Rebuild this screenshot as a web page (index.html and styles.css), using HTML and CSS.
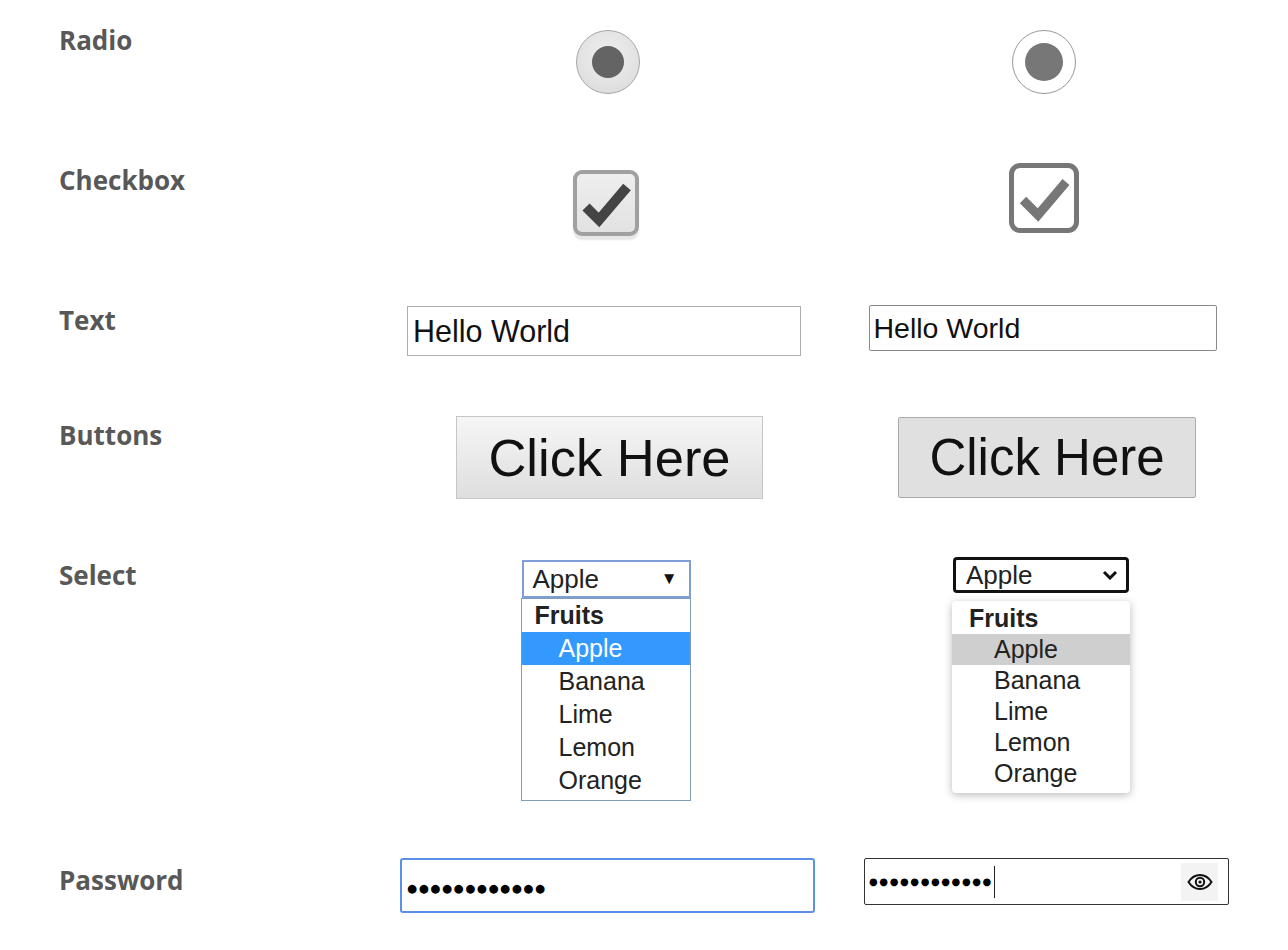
FILE: index.html
```html
<!DOCTYPE html>
<html lang="en">
<head>
<meta charset="utf-8">
<title>Form controls</title>
<link rel="stylesheet" href="styles.css">
</head>
<body>
<div class="grid">
  <div class="label">Radio</div>
  <div class="cell"><span class="radio radio-a"><span class="radio-dot"></span></span></div>
  <div class="cell"><span class="radio radio-b"><span class="radio-dot"></span></span></div>

  <div class="label">Checkbox</div>
  <div class="cell">
    <span class="check check-a">
      <svg width="58" height="58" viewBox="0 0 58 58"><path d="M9 33 L22 46 L50 13" fill="none" stroke="#444" stroke-width="10" stroke-linejoin="miter"/></svg>
    </span>
  </div>
  <div class="cell">
    <span class="check check-b">
      <svg width="60" height="60" viewBox="0 0 60 60"><path d="M9 32 L24 47 L52 14" fill="none" stroke="#777" stroke-width="9" stroke-linejoin="miter"/></svg>
    </span>
  </div>

  <div class="label">Text</div>
  <div class="cell"><input class="text text-a" type="text" value="Hello World"></div>
  <div class="cell"><input class="text text-b" type="text" value="Hello World"></div>

  <div class="label">Buttons</div>
  <div class="cell"><button class="btn btn-a" type="button">Click Here</button></div>
  <div class="cell"><button class="btn btn-b" type="button">Click Here</button></div>

  <div class="label">Select</div>
  <div class="cell">
    <div class="sel sel-a">
      <div class="sel-box"><span>Apple</span><span class="tri">&#9660;</span></div>
      <div class="sel-list">
        <div class="grp">Fruits</div>
        <div class="opt on">Apple</div>
        <div class="opt">Banana</div>
        <div class="opt">Lime</div>
        <div class="opt">Lemon</div>
        <div class="opt">Orange</div>
      </div>
    </div>
  </div>
  <div class="cell">
    <div class="sel sel-b">
      <div class="sel-box"><span>Apple</span>
        <svg class="chev" width="16" height="10" viewBox="0 0 16 10"><path d="M2 2 L8 8 L14 2" fill="none" stroke="#111" stroke-width="3"/></svg>
      </div>
      <div class="sel-list">
        <div class="grp">Fruits</div>
        <div class="opt on">Apple</div>
        <div class="opt">Banana</div>
        <div class="opt">Lime</div>
        <div class="opt">Lemon</div>
        <div class="opt">Orange</div>
      </div>
    </div>
  </div>

  <div class="label">Password</div>
  <div class="cell">
    <div class="pw pw-a"><span class="dots">&#9679;&#9679;&#9679;&#9679;&#9679;&#9679;&#9679;&#9679;&#9679;&#9679;&#9679;&#9679;</span></div>
  </div>
  <div class="cell">
    <div class="pw pw-b">
      <span class="dots">&#9679;&#9679;&#9679;&#9679;&#9679;&#9679;&#9679;&#9679;&#9679;&#9679;&#9679;&#9679;</span><span class="caret"></span>
      <span class="eye">
        <svg width="26" height="16" viewBox="0 0 26 16"><path d="M1.5 8 C5 2.5 9 1 13 1 C17 1 21 2.5 24.5 8 C21 13.5 17 15 13 15 C9 15 5 13.5 1.5 8 Z" fill="none" stroke="#111" stroke-width="2"/><circle cx="13" cy="8" r="4.2" fill="none" stroke="#111" stroke-width="2"/><circle cx="13" cy="8" r="1.6" fill="#111"/></svg>
      </span>
    </div>
  </div>
</div>
</body>
</html>
```
FILE: styles.css
```css
html, body {
  margin: 0;
  padding: 0;
  background: #fff;
}

.grid {
  display: grid;
  grid-template-columns: 330px 435px 437px;
  grid-template-rows: 140px 140px 115px 140px 305px 110px;
  padding-left: 60px;
  font-family: "Liberation Sans", Arial, sans-serif;
}

.label {
  font-family: "Open Sans", sans-serif;
  font-weight: 700;
  font-size: 26px;
  line-height: 32px;
  color: #585858;
  padding-top: 24px;
  margin-left: -1px;
}

.cell {
  display: flex;
  justify-content: center;
  align-items: flex-start;
}

/* radio */
.radio {
  box-sizing: border-box;
  width: 64px;
  height: 64px;
  border-radius: 50%;
  margin-top: 30px;
  display: flex;
  align-items: center;
  justify-content: center;
}
.radio-a {
  border: 1px solid #a8a8a8;
  background: radial-gradient(circle at 50% 40%, #f0f0f0 0%, #e2e2e2 60%, #d6d6d6 100%);
}
.radio-a .radio-dot {
  width: 32px;
  height: 32px;
  border-radius: 50%;
  background: #646464;
}
.radio-b {
  border: 1.5px solid #9a9a9a;
  background: #fff;
}
.radio-b .radio-dot {
  width: 38px;
  height: 38px;
  border-radius: 50%;
  background: #777;
}

/* checkbox */
.check {
  box-sizing: border-box;
  display: flex;
  align-items: center;
  justify-content: center;
}
.check-a {
  width: 66px;
  height: 66px;
  margin-top: 30px;
  margin-left: -3px;
  border: 4px solid #a0a0a0;
  border-radius: 9px;
  background: linear-gradient(#eeeeee, #e2e2e2);
  box-shadow: 0 4px 2px #e6e6e6;
}
.check-b {
  width: 70px;
  height: 70px;
  margin-top: 23px;
  border: 5px solid #777;
  border-radius: 11px;
  background: #fff;
}

/* text inputs */
.text {
  box-sizing: border-box;
  margin: 0;
  font-family: "Liberation Sans", Arial, sans-serif;
  color: #111;
  background: #fff;
  outline: none;
}
.text-a {
  width: 394px;
  height: 50px;
  margin-top: 26px;
  margin-left: -7px;
  border: 1px solid #adadad;
  padding: 0 5px;
  font-size: 30.5px;
}
.text-b {
  width: 348px;
  height: 46px;
  margin-top: 25px;
  margin-left: -2px;
  border: 1px solid #8a8a8a;
  border-radius: 2px;
  padding: 0 4px;
  font-size: 28.5px;
}

/* buttons */
.btn {
  box-sizing: border-box;
  margin: 0;
  padding: 0;
  font-family: "Liberation Sans", Arial, sans-serif;
  color: #111;
  cursor: pointer;
}
.btn-a {
  width: 307px;
  height: 83px;
  margin-top: 21px;
  margin-left: 4px;
  border: 1px solid #c6c6c6;
  background: linear-gradient(#f6f6f6, #dedede);
  font-size: 52.5px;
}
.btn-b {
  width: 298px;
  height: 81px;
  margin-top: 22px;
  margin-left: 7px;
  border: 1px solid #aaa;
  border-radius: 2px;
  background: #e0e0e0;
  font-size: 51px;
}

/* selects */
.sel {
  font-family: "Liberation Sans", Arial, sans-serif;
  font-size: 25px;
  color: #222;
}
.sel-box {
  box-sizing: border-box;
  display: flex;
  align-items: center;
  justify-content: space-between;
  background: #fff;
}
.sel-a {
  width: 170px;
  margin-top: 25px;
  margin-left: -4px;
}
.sel-a .sel-box {
  height: 38px;
  border: 2px solid #7f9ed8;
  padding: 0 11px 0 9px;
  font-size: 26px;
  margin-left: 1px;
}
.tri {
  font-size: 17px;
  color: #111;
}
.sel-a .sel-list {
  box-sizing: border-box;
  border: 1px solid #7f9db9;
  padding-bottom: 3px;
}
.sel-a .grp {
  font-weight: 700;
  padding-left: 13px;
  height: 33px;
  line-height: 33px;
}
.sel-a .opt {
  padding-left: 37px;
  height: 33px;
  line-height: 32px;
}
.sel-a .opt.on {
  background: #3399ff;
  color: #fff;
}

.sel-b {
  width: 178px;
  margin-top: 22px;
  margin-left: -5px;
}
.sel-b .sel-box {
  width: 176px;
  margin-left: 1px;
  height: 36px;
  border: 3px solid #111;
  border-radius: 4px;
  padding: 0 8px 0 10px;
  font-size: 26px;
}
.sel-b .sel-list {
  margin-top: 8px;
  background: #fff;
  border-radius: 4px;
  box-shadow: 0 2px 8px rgba(0, 0, 0, 0.28);
  padding: 2px 0 4px;
}
.sel-b .grp {
  font-weight: 700;
  padding-left: 17px;
  height: 31px;
  line-height: 31px;
}
.sel-b .opt {
  padding-left: 42px;
  height: 31px;
  line-height: 31px;
}
.sel-b .opt.on {
  background: #cfcfcf;
}

/* password */
.pw {
  box-sizing: border-box;
  display: flex;
  align-items: center;
  background: #fff;
}
.dots {
  font-family: "DejaVu Sans", sans-serif;
  color: #000;
}
.pw-a {
  width: 415px;
  height: 55px;
  margin-top: 18px;
  border: 2px solid #5b8fe8;
  border-radius: 3px;
  padding-left: 5px;
}
.pw-a .dots {
  font-size: 11.5px;
  letter-spacing: 1.6px;
  padding-top: 4px;
}
.pw-b {
  width: 365px;
  height: 47px;
  margin-top: 18px;
  margin-left: 6px;
  border: 1.5px solid #333;
  border-radius: 2px;
  padding-left: 4px;
  padding-right: 10px;
}
.pw-b .dots {
  font-size: 10px;
  letter-spacing: 1.6px;
}
.caret {
  width: 1px;
  height: 32px;
  background: #222;
  margin-left: 1px;
}
.eye {
  margin-left: auto;
  width: 37px;
  height: 38px;
  background: #f3f3f3;
  display: flex;
  align-items: center;
  justify-content: center;
}
```
